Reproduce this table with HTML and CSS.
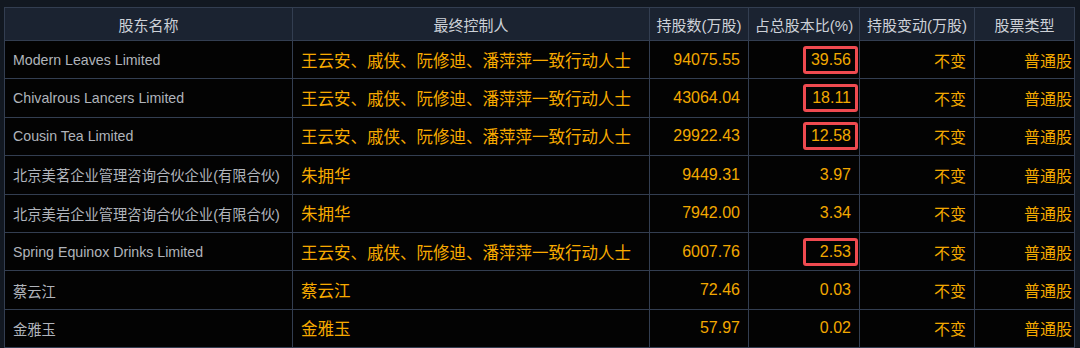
FILE: index.html
```html
<!DOCTYPE html>
<html lang="zh-CN">
<head>
<meta charset="utf-8">
<link rel="stylesheet" href="styles.css">
</head>
<body>
<table class="holders">
  <colgroup>
    <col class="c-name"><col class="c-ctrl"><col class="c-shares"><col class="c-pct"><col class="c-chg"><col class="c-type">
  </colgroup>
  <thead>
    <tr>
      <th>股东名称</th><th>最终控制人</th><th>持股数(万股)</th><th>占总股本比(%)</th><th>持股变动(万股)</th><th>股票类型</th>
    </tr>
  </thead>
  <tbody>
    <tr><td class="name">Modern Leaves Limited</td><td class="ctrl">王云安、戚侠、阮修迪、潘萍萍一致行动人士</td><td class="num">94075.55</td><td class="num pct"><span class="hl">39.56</span></td><td class="num">不变</td><td class="num type">普通股</td></tr>
    <tr><td class="name">Chivalrous Lancers Limited</td><td class="ctrl">王云安、戚侠、阮修迪、潘萍萍一致行动人士</td><td class="num">43064.04</td><td class="num pct"><span class="hl">18.11</span></td><td class="num">不变</td><td class="num type">普通股</td></tr>
    <tr><td class="name">Cousin Tea Limited</td><td class="ctrl">王云安、戚侠、阮修迪、潘萍萍一致行动人士</td><td class="num">29922.43</td><td class="num pct"><span class="hl">12.58</span></td><td class="num">不变</td><td class="num type">普通股</td></tr>
    <tr><td class="name cjk">北京美茗企业管理咨询合伙企业(有限合伙)</td><td class="ctrl">朱拥华</td><td class="num">9449.31</td><td class="num pct">3.97</td><td class="num">不变</td><td class="num type">普通股</td></tr>
    <tr><td class="name cjk">北京美岩企业管理咨询合伙企业(有限合伙)</td><td class="ctrl">朱拥华</td><td class="num">7942.00</td><td class="num pct">3.34</td><td class="num">不变</td><td class="num type">普通股</td></tr>
    <tr><td class="name">Spring Equinox Drinks Limited</td><td class="ctrl">王云安、戚侠、阮修迪、潘萍萍一致行动人士</td><td class="num">6007.76</td><td class="num pct"><span class="hl">2.53</span></td><td class="num">不变</td><td class="num type">普通股</td></tr>
    <tr><td class="name cjk">蔡云江</td><td class="ctrl">蔡云江</td><td class="num">72.46</td><td class="num pct">0.03</td><td class="num">不变</td><td class="num type">普通股</td></tr>
    <tr><td class="name cjk">金雅玉</td><td class="ctrl">金雅玉</td><td class="num">57.97</td><td class="num pct">0.02</td><td class="num">不变</td><td class="num type">普通股</td></tr>
  </tbody>
</table>
</body>
</html>
```
FILE: styles.css
```css
html, body {
  margin: 0;
  padding: 0;
  background-color: #121821;
  width: 1080px;
  height: 348px;
  overflow: hidden;
}
body {
  padding: 7px 0 0 4px;
  box-sizing: border-box;
  font-family: "Liberation Sans", Arial, "Noto Sans CJK SC", sans-serif;
}
.holders {
  border-collapse: collapse;
  table-layout: fixed;
  width: 1070px;
  background-color: #000000;
}
.c-name { width: 288px; }
.c-ctrl { width: 357px; }
.c-shares { width: 99px; }
.c-pct { width: 111px; }
.c-chg { width: 115px; }
.c-type { width: 100px; }

.holders th, .holders td {
  border: 1px solid #333e51;
  white-space: nowrap;
  overflow: hidden;
}
.holders thead th {
  height: 32px;
  padding: 0;
  background-color: #1b2331;
  color: #cdd1d8;
  font-weight: normal;
  font-size: 15px;
  text-align: center;
  font-family: "Liberation Sans", "Noto Sans CJK SC", sans-serif;
}
.holders tbody td {
  height: 37.4px;
  padding: 0 8px;
  background-color: #030303;
  font-family: "Liberation Sans", "Noto Sans CJK SC", sans-serif;
}
.name {
  color: #b0b4bb;
  font-size: 14.2px;
}
.name.cjk {
  font-size: 14.3px;
}
.ctrl {
  color: #f7aa00;
  font-size: 16.5px;
}
.num {
  color: #f2a800;
  font-size: 16px;
  text-align: right;
}
.holders tbody td.type {
  padding-right: 2px;
}
.hl {
  display: inline-block;
  box-sizing: border-box;
  width: 55px;
  height: 28px;
  line-height: 22px;
  padding-right: 4px;
  margin-right: -7px;
  border: 3px solid #ef4a50;
  border-radius: 3px;
  text-align: right;
  vertical-align: middle;
}
```
